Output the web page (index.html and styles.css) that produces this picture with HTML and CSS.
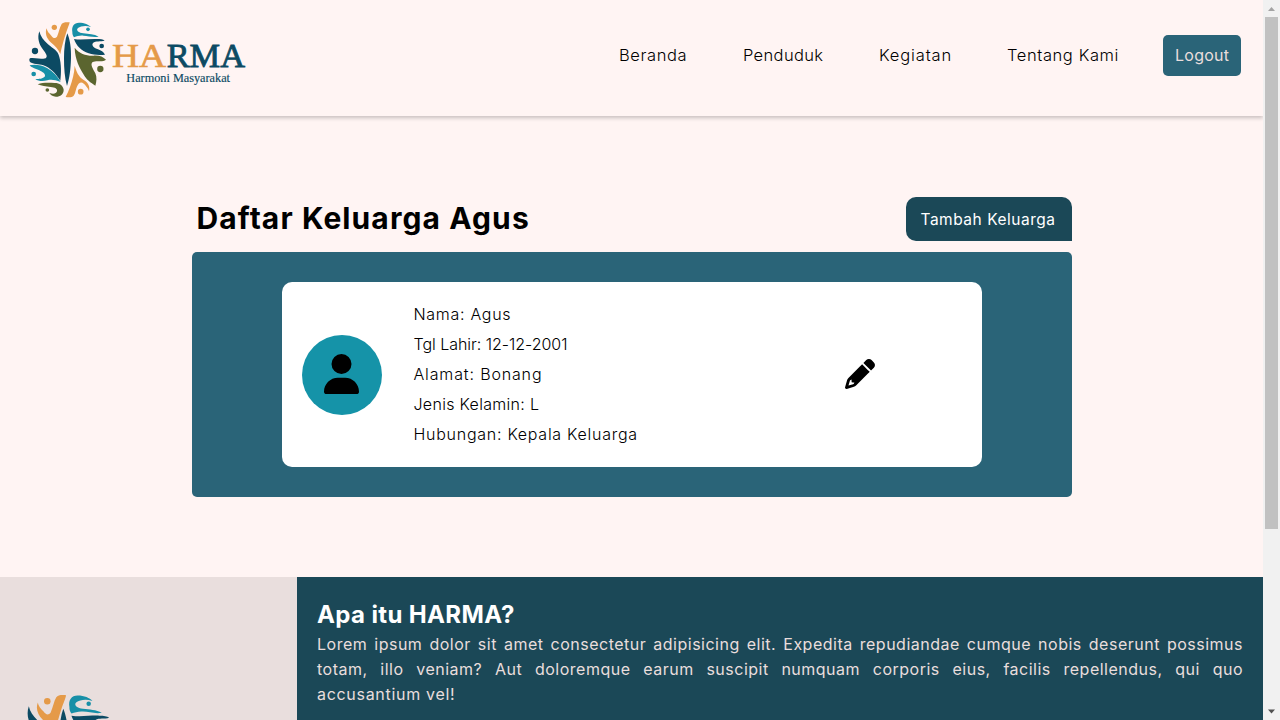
FILE: index.html
```html
<!DOCTYPE html>
<html lang="id">
<head>
<meta charset="utf-8">
<title>HARMA</title>
<link rel="stylesheet" href="styles.css">
</head>
<body>
<svg class="defs" width="0" height="0" aria-hidden="true">
  <symbol id="emblem" viewBox="0 0 690 300">
    <g fill="#e59a48">
      <circle cx="103" cy="52" r="8"/>
      <path d="M80 55C74 70 80 85 92 97C106 109 115 118 121 132C125 112 133 84 139 66C144 52 148 43 149 37C139 36 129 36 125 42C119 52 117 66 111 80C105 87 99 84 94 77C87 70 81 64 80 55Z"/>
      <circle cx="182" cy="245" r="8.500"/>
      <path d="M164 167C163 190 157 211 150 231C146 243 141 252 137 261C146 262 156 263 161 257C168 248 167 232 176 221C184 213 191 219 196 226C202 233 205 238 207 244C211 228 203 216 190 209C176 200 169 185 164 167Z"/>
    </g>
    <g fill="#0c4a63">
      <circle cx="45" cy="123" r="9.500"/>
      <path d="M142 70C150 88 154 116 153 144C152 177 149 203 141 228C134 203 132 176 132 145C132 116 135 90 142 70Z"/>
      <path d="M58 64C51 84 57 104 70 120C78 131 84 139 77 145C69 149 54 143 32 144C27 144 27 151 30 156C40 163 55 161 70 166C90 173 107 190 121 212C124 190 124 162 118 141C114 122 99 116 84 103C71 91 61 79 58 64Z"/>
      <circle cx="245" cy="108" r="7"/>
      <path d="M162 87C184 91 207 86 230 87C241 87 249 88 254 92C242 96 227 91 219 99C213 106 223 115 234 118C243 121 251 126 255 134C238 136 221 135 206 130C184 122 169 108 162 87Z"/>
    </g>
    <g fill="#188fa7">
      <circle cx="204" cy="58" r="5.500"/>
      <path d="M157 66C154 49 162 38 177 38C193 38 207 44 213 51C199 46 182 48 174 54C166 61 177 69 190 70C206 72 222 72 236 80C219 83 204 77 190 77C179 76 171 79 162 82C158 76 157 73 157 66Z"/>
      <circle cx="41" cy="192" r="7"/>
      <path d="M29 166C42 162 64 164 81 174C99 184 112 198 122 216C105 210 95 208 82 211C69 215 54 214 46 207C58 208 73 205 75 198C76 191 68 186 58 181C49 176 35 174 29 166Z"/>
    </g>
    <g fill="#5b652f">
      <circle cx="241" cy="177" r="9.500"/>
      <path d="M164 113C178 131 199 138 221 137C239 136 249 141 258 149C248 158 230 150 218 156C209 163 220 178 226 190C231 202 230 215 226 227C212 218 199 209 190 192C180 174 165 151 164 113Z"/>
      <circle cx="82" cy="240" r="5.500"/>
      <path d="M53 223C71 216 91 219 104 219C119 219 129 227 131 239C131 253 121 260 108 260C98 260 91 254 88 249C100 253 109 251 111 244C113 236 105 232 92 231C77 230 65 227 53 223Z"/>
    </g>
  </symbol>
</svg>
<div class="page">
  <header class="header">
    <svg class="header-logo" viewBox="0 0 230 100">
      <use href="#emblem" width="230" height="100"/>
      <g class="logo-text">
        <text x="92" y="56.700" font-size="33" textLength="54" lengthAdjust="spacingAndGlyphs" fill="#e59a48" stroke="#e59a48" stroke-width=".6">HA</text>
        <text x="146.700" y="56.700" font-size="33" textLength="78.300" lengthAdjust="spacingAndGlyphs" fill="#0c4a63" stroke="#0c4a63" stroke-width=".8">RMA</text>
        <text x="106.300" y="71.700" font-size="11.500" textLength="103.700" lengthAdjust="spacingAndGlyphs" fill="#0c4a63" stroke="#0c4a63" stroke-width=".15">Harmoni Masyarakat</text>
      </g>
    </svg>
    <nav class="nav">
      <a class="link link-beranda">Beranda</a>
      <a class="link link-penduduk">Penduduk</a>
      <a class="link link-kegiatan">Kegiatan</a>
      <a class="link link-tentang">Tentang Kami</a>
      <a class="logout">Logout</a>
    </nav>
  </header>
  <main class="main">
    <div class="title-row">
      <h1 class="title">Daftar Keluarga Agus</h1>
      <a class="add">Tambah Keluarga</a>
    </div>
    <section class="panel">
      <article class="card">
        <div class="avatar">
          <svg width="35" height="40" viewBox="0 0 448 512"><path d="M224 256A128 128 0 1 0 224 0a128 128 0 1 0 0 256zm-45.700 48C79.800 304 0 383.800 0 482.300C0 498.700 13.300 512 29.700 512H418.300c16.400 0 29.700-13.300 29.700-29.700C448 383.800 368.200 304 269.700 304H178.300z"/></svg>
        </div>
        <ul class="info">
          <li class="info-name">Nama: Agus</li>
          <li class="info-birth">Tgl Lahir: 12-12-2001</li>
          <li class="info-address">Alamat: Bonang</li>
          <li class="info-gender">Jenis Kelamin: L</li>
          <li class="info-relation">Hubungan: Kepala Keluarga</li>
        </ul>
        <svg class="edit" width="30" height="30" viewBox="0 0 512 512"><path fill-rule="evenodd" d="M410.300 231l11.300-11.300-33.900-33.900-62.100-62.100L291.700 89.800l-11.300 11.300-22.600 22.600L58.600 322.900c-10.400 10.400-18 23.300-22.200 37.400L1 480.700c-2.500 8.400-.2 17.500 6.100 23.700s15.300 8.500 23.700 6.100l120.300-35.400c14.100-4.200 27-11.800 37.400-22.200L387.700 253.700 410.300 231zM160 399.400l-9.100 22.700c-4 3.100-8.500 5.400-13.300 6.900L59.400 452l23-78.100c1.400-4.900 3.800-9.400 6.900-13.300l22.700-9.100v32c0 8.800 7.200 16 16 16h32zM362.700 18.700L314.300 67.100l130 130 48.400-48.400c25-25 25-65.500 0-90.500L453.300 18.700c-25-25-65.500-25-90.500 0z"/></svg>
      </article>
    </section>
  </main>
  <footer class="footer">
    <div class="footer-brand"><svg class="footer-logo"><use href="#emblem"/></svg></div>
    <div class="about">
      <h2 class="about-title">Apa itu HARMA?</h2>
      <p class="about-text"><span class="line">Lorem ipsum dolor sit amet consectetur adipisicing elit. Expedita repudiandae cumque nobis deserunt possimus </span><span class="line">totam, illo veniam? Aut doloremque earum suscipit numquam corporis eius, facilis repellendus, qui quo </span><span class="line last">accusantium vel!</span></p>
    </div>
  </footer>
</div>
<div class="scrollbar">
  <svg width="17" height="17"><path d="M5 11L8.500 7L12 11Z" fill="#a3a3a3"/></svg>
  <div class="thumb"></div>
  <svg class="down" width="17" height="17"><path d="M5 6.500L8.500 10.500L12 6.500Z" fill="#505050"/></svg>
</div>
</body>
</html>
```
FILE: styles.css
```css
* { box-sizing: border-box; margin: 0; padding: 0; }
body { display: flex; height: 720px; overflow: hidden; background: #fff4f3; font: 300 16px/24px Inter, sans-serif; color: #000; }
.defs { position: absolute; }
.page { width: 1263px; height: 720px; overflow: hidden; display: flex; flex-direction: column; flex: none; }
.header { height: 116px; flex: none; display: flex; justify-content: space-between; padding: 10px 22px 0 20px; box-shadow: 0 2px 4px rgba(0,0,0,.22); }
.header-logo { width: 230px; height: 100px; }
.logo-text { font-family: "Liberation Serif", serif; }
.nav { display: flex; align-items: center; height: 41px; margin-top: 25px; white-space: nowrap; }
.link { margin-right: 56px; padding-bottom: 1px; font-size: 16.5px; }
.link-beranda { width: 68px; letter-spacing: .6px; }
.link-penduduk { width: 80px; letter-spacing: .35px; }
.link-kegiatan { width: 72px; letter-spacing: .85px; }
.link-tentang { width: 112px; margin-right: 44px; letter-spacing: .6px; }
.logout { width: 78px; height: 41px; padding-left: 12px; line-height: 41px; border-radius: 5px; background: #2a6478; color: #e9dedd; font-weight: 400; letter-spacing: .25px; }
.main { width: 880px; height: 461px; flex: none; margin: 0 auto; padding-top: 81px; }
.title-row { display: flex; justify-content: space-between; height: 44px; margin-bottom: 11px; }
.title { padding-left: 5px; font-size: 30px; line-height: 42px; font-weight: 700; letter-spacing: 1.1px; }
.add { width: 166px; padding-left: 15px; line-height: 45px; font-size: 15.5px; letter-spacing: .52px; font-weight: 400; color: #fff; background: #1b4857; border-radius: 10px 10px 0 10px; white-space: nowrap; }
.panel { height: 245px; padding: 30px 90px; border-radius: 5px; background: #2a6478; }
.card { height: 185px; padding: 0 20px; display: flex; align-items: center; border-radius: 10px; background: #fff; }
.avatar { width: 80px; height: 80px; flex: none; display: flex; align-items: center; justify-content: center; padding-bottom: 2px; border-radius: 50%; background: #1593a8; }
.info { width: 431px; margin-left: 32px; padding-bottom: 2px; list-style: none; line-height: 30px; }
.info-name { letter-spacing: .7px; }
.info-birth { letter-spacing: -.03px; }
.info-address { letter-spacing: .85px; }
.info-gender { letter-spacing: .3px; }
.info-relation { letter-spacing: .73px; }
.edit { margin-bottom: 2px; }
.footer { display: flex; height: 143px; flex: none; }
.footer-brand { width: 297px; padding: 103px 0 0 5px; overflow: hidden; background: #e9dedd; }
.footer-logo { width: 283px; height: 123px; }
.about { flex: 1; padding: 20px; background: #1b4857; color: #e9dedd; font-weight: 400; }
.about-title { font-size: 24px; line-height: 35px; font-weight: 700; letter-spacing: .37px; color: #fff; }
.about-text { line-height: 25px; letter-spacing: .5px; }
.line { display: block; text-align: justify; text-align-last: justify; white-space: nowrap; }
.last { text-align-last: left; letter-spacing: .7px; }
.scrollbar { width: 17px; height: 720px; background: #f1f1f1; display: flex; flex-direction: column; }
.scrollbar svg { display: block; flex: none; }
.thumb { height: 512px; margin: 0 2px; background: #c1c1c1; }
.down { margin-top: auto; }
```
